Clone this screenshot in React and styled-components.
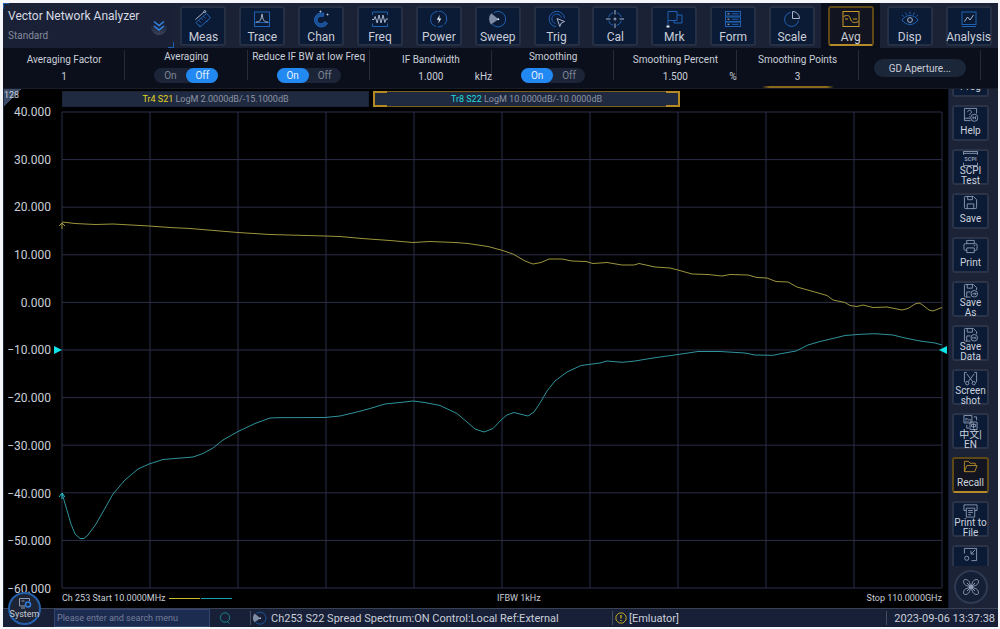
import { useLayoutEffect, useRef, useState } from "react";
import styled, { createGlobalStyle } from "styled-components";

const BLUE = "#1f62b4";
const PALE = "#aab6cc";
const GOLD = "#c9982c";

const topIcons = {
  Meas: (
    <>
      <path d="M2 12.5 12.5 3.5 16.5 8 6 17z" stroke={BLUE} />
      <path d="M5 10.5l2 2.2M7.5 8.4l1.6 1.7M9.8 6.4l2 2.2M12 10.5l1.5 1.5M5 14.5l1 1" stroke={BLUE} />
      <path d="M1.5 9.5 10 2" stroke={PALE} />
      <circle cx="10.8" cy="1.6" r="1" stroke={PALE} />
    </>
  ),
  Trace: (
    <>
      <rect x="1.5" y="2" width="15" height="14.5" stroke={BLUE} />
      <path d="M1.5 12.5h15" stroke={BLUE} />
      <path d="M3 12c4.5 0 5-2 6-8 1 6 1.5 8 6 8" stroke={PALE} />
    </>
  ),
  Chan: (
    <>
      <path d="M12 3.4A7 7 0 1 0 15.5 13.5L12.5 11.5A3.8 3.8 0 1 1 11 6.8z" fill="#1a4f94" stroke={BLUE} />
      <path d="M8.5 .5v2M7.5 1.5h2M15.5 3.5v2M14.500 4.5h2" stroke={PALE} />
    </>
  ),
  Freq: (
    <>
      <path d="M1.5 5V2h15v3M1.5 13.5v3h15v-3" stroke={BLUE} />
      <path d="M1 9.5h2l1.2-3 2 6.5L8 5l2 8 2-8 1.8 7.5L15.2 9H17" stroke={PALE} />
    </>
  ),
  Power: (
    <>
      <path d="M7.5 1.5A7.7 7.7 0 0 0 6 16.5M9 1.3A7.7 7.7 0 0 1 14.5 14.5M8 16.8a7.7 7.7 0 0 0 5-1.2" stroke={BLUE} />
      <path d="M9.8 4.8 6.8 9.8H9l-.7 3.7 3-5H9.2z" fill="#e4ebf8" />
    </>
  ),
  Sweep: (
    <>
      <path d="M4.5 2.9A7.7 7.7 0 1 1 3 14" stroke={BLUE} />
      <path d="M9.5 9.3 2.2 3.2A9 9 0 0 0 2 14.5z" fill="#7e8ba4" />
      <circle cx="9.3" cy="9.3" r="1" fill="#dce4f2" />
    </>
  ),
  Trig: (
    <>
      <path d="M16.5 8A7.7 7.7 0 1 0 8 16.7" stroke={BLUE} />
      <path d="M13.3 7.5A4.8 4.8 0 1 0 7.5 13.5" stroke={BLUE} />
      <path d="M9 8.5l7.5 3-3.2 1.5-1.5 3.5z" stroke={PALE} />
    </>
  ),
  Cal: (
    <>
      <path d="M7.2 2.6a6.8 6.8 0 0 0-4.6 4.6M10.8 2.6a6.8 6.8 0 0 1 4.6 4.6M15.4 10.8a6.8 6.8 0 0 1-4.6 4.6M7.2 15.4a6.8 6.8 0 0 1-4.6-4.6" stroke={BLUE} />
      <path d="M9 0v4.5M9 13.5V18M0 9h4.5M13.5 9H18" stroke={PALE} />
      <path d="M9 7.5v3M7.5 9h3" stroke={PALE} />
    </>
  ),
  Mrk: (
    <>
      <path d="M3 15V1.5h9v9H3M12 5h5v8H9v-2.5" stroke={BLUE} />
      <path d="M1.5 16.5h3" stroke="#e4ebf8" strokeWidth="2" />
    </>
  ),
  Form: (
    <>
      <rect x="1.5" y="1.5" width="15" height="4.5" stroke={BLUE} />
      <rect x="1.5" y="7" width="15" height="4.5" stroke={BLUE} />
      <rect x="1.5" y="12" width="15" height="4.5" stroke={BLUE} />
      <path d="M3.5 3.8h2M3.5 9.2h2M3.5 14.3h2" stroke={PALE} />
      <path d="M8 3.8h6.5M8 9.2h6.5M8 14.3h6.5" stroke={BLUE} />
    </>
  ),
  Scale: (
    <>
      <path d="M7.5 2.5A7 7 0 1 0 15.5 10.5" stroke={BLUE} />
      <path d="M9.5 1.5A7 7 0 0 1 16.5 8.5h-7z" stroke={PALE} />
    </>
  ),
  Avg: (
    <>
      <rect x="1" y="1.5" width="16" height="15" stroke={GOLD} />
      <path d="M1.5 6.500c4.500-2 6-1 7 2.500s3.500 4.500 8 2.500M3 9h3M11 9h4" stroke={GOLD} />
    </>
  ),
  Disp: (
    <>
      <path d="M1 10c4-6 12-6 16 0-4 6-12 6-16 0z" stroke={BLUE} />
      <path d="M9 1.500v2.500M4.500 2.500l1.200 2.300M13.500 2.500l-1.200 2.300M1 5l1.800 1.500M17 5l-1.800 1.500" stroke={BLUE} />
      <circle cx="9" cy="10" r="2.4" stroke={PALE} />
    </>
  ),
  Analysis: (
    <>
      <rect x="2" y="2" width="14" height="12.5" stroke={BLUE} />
      <path d="M2 16.5h14" stroke={BLUE} />
      <path d="M4.5 11.5l3-4.5 2.5 3L13.5 5" stroke={PALE} />
    </>
  ),
};

const disk =
  "M8 15H2.500A1 1 0 0 1 1.500 14V2.500A1 1 0 0 1 2.500 1.500H11L14.500 5V7.500M4.500 1.500V5.500H10V1.500M4 15V9.500h4";

const sideItems = [
  { lines: ["Prog"], icon: <path d="M2 2h12v12H2z" /> },
  {
    lines: ["Help"],
    icon: (
      <>
        <path d="M8 14.5H1.5v-13h13V7M1.5 12h6M5 5.5c0-3 4-2.5 4 0 0 1.5-2 1.5-2 3M7 10v1" />
        <circle cx="12" cy="11.5" r="3.8" />
        <path d="M10.7 10v3M13.3 10v3M10.7 11.5h2.6" />
      </>
    ),
  },
  {
    lines: ["SCPI", "Test"],
    icon: (
      <>
        <path d="M.5 4V.5h15V4M.5 2.500h15M.5 12.500v3h15v-3" />
        <text x="8" y="10.500" fontSize="6" fontWeight="700" textAnchor="middle" fill="currentColor" stroke="none">
          SCPI
        </text>
      </>
    ),
  },
  {
    lines: ["Save"],
    icon: (
      <path d="M2.5 14.5a1 1 0 0 1-1-1v-11a1 1 0 0 1 1-1H11l3.5 3.5v8.5a1 1 0 0 1-1 1zM5 1.5v3.5h5V1.5M4.5 14.5v-5h7v5" />
    ),
  },
  {
    lines: ["Print"],
    icon: (
      <path d="M4 5V1.5h8V5M4 12H2.5A1.500 1.500 0 0 1 1 10.5v-4A1.500 1.500 0 0 1 2.5 5h11A1.500 1.500 0 0 1 15 6.5v4a1.500 1.500 0 0 1-1.5 1.5H12M4 9.5h8v5H4zM11.5 7h1.5" />
    ),
  },
  {
    lines: ["Save", "As"],
    icon: (
      <>
        <path d={disk} />
        <circle cx="12" cy="11.5" r="3.5" />
        <path d="M10 11.5h4M12.500 10 14 11.500l-1.500 1.500" />
      </>
    ),
  },
  {
    lines: ["Save", "Data"],
    icon: (
      <>
        <path d={disk} />
        <circle cx="12" cy="11.5" r="3.5" />
        <path d="M10.500 10.500v2M12 10.500v2M13.500 10.500v2" />
      </>
    ),
  },
  {
    lines: ["Screen", "shot"],
    icon: (
      <>
        <path d="M4 1.5H1.5V12M12 1.5h2.500V12M4 3l6.500 8.500M12 3l-6.500 8.500" />
        <circle cx="4.500" cy="13" r="1.800" />
        <circle cx="11.500" cy="13" r="1.800" />
      </>
    ),
  },
  {
    lines: ["中文|", "EN"],
    icon: (
      <>
        <path d="M1 .5h8.500v8H1zM11.500 2h3v3.500M4 10.500V14h2.500" />
        <text x="2" y="7" fontSize="6" fill="currentColor" stroke="none">
          En
        </text>
        <path d="M7.500 7.500H15v8H7.500zM9 10h4.500v2.500H9zM11.200 8.500v6" />
      </>
    ),
  },
  {
    lines: ["Recall"],
    active: true,
    icon: <path d="M1.5 13.5v-11H6L7.5 4.5H13V7M1.5 13.5 4 7h11l-2.5 6.5z" />,
  },
  {
    lines: ["Print to", "File"],
    icon: <path d="M3.5 8H1V2h14v6h-2.5M3.5 5.5h9V15h-9zM5.5 8h5M5.5 10h5M5.5 12.5h3" />,
  },
  {
    lines: [""],
    icon: (
      <>
        <path d="M1.5 7V1.5h13v13H9M13 3 8.5 7.5M8.5 4v3.5H12" />
        <circle cx="4" cy="12" r="2.2" />
      </>
    ),
  },
];

const params = [
  { id: "factor", label: "Averaging Factor", value: "1" },
  { id: "averaging", label: "Averaging", toggle: "Off" },
  { id: "reduce", label: "Reduce IF BW at low Freq", toggle: "On" },
  { id: "ifbw", label: "IF Bandwidth", value: "1.000", unit: "kHz" },
  { id: "smoothing", label: "Smoothing", toggle: "On" },
  { id: "percent", label: "Smoothing Percent", value: "1.500", unit: "%" },
  { id: "points", label: "Smoothing Points", value: "3", active: true },
];

const scale = [40, 30, 20, 10, 0, -10, -20, -30, -40, -50, -60];

// trace points, 880 x 476 graph units
const s21 =
  "0,110 13,111.5 33,112.5 51,112 87,114 108,115.5 128,116.5 176,120.5 208,122.5 263,124 278,124.5 300,126.5 328,128.5 351,130.5 368,129.5 393,130.5 406,131.5 426,134.5 439,138 451,142 463,149 471,152 479,150.5 487,147 500,147 510,149 524,149.5 531,151.5 545,150.5 560,153 572,153 577,151.5 593,155 608,156 616,158 630,162 646,162.5 660,164 668,162.5 686,163 695,165.5 705,166 714,169.5 726,170 735,175 751,179.5 765,183.5 771,188 783,190.5 788,193.5 795,194.5 801,193 811,195.5 825,195 840,198 846,196.5 853,192 857,191 860,192.5 867,198 871,199 880,195.5";
const s22 =
  "0,381 4,395 9,412 13,422 18,426.5 22,426.5 26,423 34,412 42,398 51,382 63,368 76,357 87,352 101,347.5 113,346.5 131,345 141,341.5 151,336 161,328 176,319.5 193,311.5 208,306 216,305.7 263,305.5 278,304 293,300.5 308,296.5 323,292 338,290.5 351,289 363,290.5 378,293.5 395,301.5 405,310 413,317 422,320 431,316.5 439,308 445,303 452,300.5 460,302.5 466,304 472,300 478,291 485,279 493,269 505,260 519,253.5 538,251 545,249 560,250.3 573,249 588,246.5 598,245 616,242.5 636,239.5 658,239.5 683,241 693,243 711,243.3 720,241.5 734,239 746,233 758,229.5 773,226 783,223.5 798,222.3 813,221.7 831,223 843,226 858,229 873,231 880,233";

const Toggle = ({ label, initial }) => {
  const [value, setValue] = useState(initial);

  return (
    <ToggleBox role="group" aria-label={label}>
      {["On", "Off"].map((option) => (
        <ToggleButton
          key={option}
          type="button"
          $on={value === option}
          aria-pressed={value === option}
          onClick={() => setValue(option)}
        >
          {option}
        </ToggleButton>
      ))}
    </ToggleBox>
  );
};

const TopBar = () => (
  <TopBox>
    <TitleBox>
      <TitleText>
        <h1>Vector Network Analyzer</h1>
        <p>Standard</p>
      </TitleText>
      <ExpandButton type="button" aria-label="Expand">
        <svg width="16" height="18" viewBox="0 0 16 18" fill="none" stroke="#2f86e8" strokeWidth="1.5">
          <path d="M3 4.5l5 4 5-4M3 9l5 4 5-4" />
        </svg>
      </ExpandButton>
    </TitleBox>
    <Menu>
      {Object.keys(topIcons).map((name) => (
        <MenuCell key={name} $active={name === "Avg"}>
          <MenuButton type="button" $active={name === "Avg"}>
            <svg width="18" height="18" viewBox="0 0 18 18" fill="none">
              {topIcons[name]}
            </svg>
            <span>{name}</span>
          </MenuButton>
        </MenuCell>
      ))}
    </Menu>
  </TopBox>
);

const ParamBar = () => (
  <ParamBox>
    {params.map((param) => (
      <ParamCell key={param.id} $active={param.active}>
        {param.toggle ? (
          <>
            <ToggleLabel>{param.label}</ToggleLabel>
            <Toggle label={param.label} initial={param.toggle} />
          </>
        ) : (
          <>
            <ParamLabel htmlFor={param.id}>{param.label}</ParamLabel>
            <ValueRow>
              <ValueInput id={param.id} defaultValue={param.value} />
              <Unit>{param.unit}</Unit>
            </ValueRow>
          </>
        )}
      </ParamCell>
    ))}
    <ParamCell>
      <ApertureButton type="button">GD Aperture...</ApertureButton>
    </ParamCell>
  </ParamBox>
);

const Graph = () => (
  <GraphSvg viewBox="0 0 880 476" preserveAspectRatio="none">
    <g stroke="#2b2e48" fill="none">
      {scale.map((value, i) => (
        <path key={value} d={`M0 ${i * 47.6}H880M${i * 88} 0V476`} vectorEffect="non-scaling-stroke" />
      ))}
    </g>
    <g fill="none" strokeLinejoin="round">
      <polyline points={s21} stroke="#9c953c" vectorEffect="non-scaling-stroke" />
      <polyline points={s22} stroke="#2f939c" vectorEffect="non-scaling-stroke" />
      <path d="M-3 114l3-3 3 3M0 111v6" stroke="#a89c30" />
      <path d="M-3 385l3-4 3 4M0 381v6" stroke="#22c5cc" />
    </g>
    <path d="M-8 234v8l8-4zM885 234v8l-8-4z" fill="#10e4e8" />
  </GraphSvg>
);

const Plot = () => (
  <PlotBox>
    <Corner>128</Corner>
    <Axis>
      {scale.map((value) => (
        <span key={value}>{value.toFixed(3).replace("-", "−")}</span>
      ))}
    </Axis>
    <PlotBody>
      <TraceTabs>
        <TraceTab type="button" $color="#e2d622">
          <b>Tr4 S21</b> LogM 2.0000dB/-15.1000dB
        </TraceTab>
        <TraceTab type="button" $color="#1fdadd" $active>
          <b>Tr8 S22</b> LogM 10.0000dB/-10.0000dB
        </TraceTab>
      </TraceTabs>
      <Graph />
      <Footer>
        <FooterPart>
          <span>Ch 253 Start 10.0000MHz</span>
          <Legend>
            <LegendLine $color="#c9bd20" />
            <LegendLine $color="#16a3ae" />
          </Legend>
        </FooterPart>
        <FooterPart $spread>
          <span>IFBW 1kHz</span>
          <span>Stop 110.0000GHz</span>
        </FooterPart>
      </Footer>
    </PlotBody>
  </PlotBox>
);

const Sidebar = () => {
  const listRef = useRef(null);

  useLayoutEffect(() => {
    listRef.current.scrollTop = 28;
  }, []);

  return (
    <SideBox>
      <SideList ref={listRef}>
        {sideItems.map((item, i) => (
          <SideButton
            key={i}
            type="button"
            $active={item.active}
            $tall={item.lines.length > 1}
            aria-label={item.lines[0] ? undefined : "Minimize"}
          >
            <svg width="15" height="15" viewBox="0 0 16 16" fill="none" stroke="currentColor">
              {item.icon}
            </svg>
            {item.lines.map((line) => (
              <span key={line}>{line}</span>
            ))}
          </SideButton>
        ))}
      </SideList>
      <RoundButton type="button" aria-label="Tools">
        <svg width="18" height="18" viewBox="0 0 18 18" fill="none" stroke="#8d9ab2">
          {[0, 90, 180, 270].map((angle) => (
            <path
              key={angle}
              d="M9 9 7.500 4.500C6.500 1.500 3 1 2 2s-.5 4.500 2.500 5.500zM9 9 5 5"
              transform={`rotate(${angle} 9 9)`}
            />
          ))}
        </svg>
      </RoundButton>
    </SideBox>
  );
};

const StatusBar = () => (
  <StatusBox>
    <SystemButton type="button">
      <svg width="14" height="12" viewBox="0 0 14 12" fill="none">
        <path d="M7 9H1.5V1.5h10V4M3.5 4h3M3 11h4" stroke="#8d9ab2" />
        <circle cx="10" cy="7.5" r="2.5" stroke="#2f7fe0" strokeWidth="1.5" />
      </svg>
      <span>System</span>
    </SystemButton>
    <SearchBox>
      <SearchInput aria-label="Search menu" placeholder="Please enter and search menu" />
      <SearchButton type="button" aria-label="Search">
        <svg width="14" height="14" viewBox="0 0 14 14" fill="none" stroke="#1c8088">
          <circle cx="7" cy="6.5" r="4.7" />
          <path d="M9.5 10.5l2 2" />
        </svg>
      </SearchButton>
    </SearchBox>
    <StatusPart $grow={361}>
      <svg width="14" height="14" viewBox="0 0 18 18" fill="none">
        {topIcons.Sweep}
      </svg>
      <span>Ch253 S22 Spread Spectrum:ON Control:Local Ref:External</span>
    </StatusPart>
    <StatusPart $grow={272} $tight>
      <svg width="12" height="12" viewBox="0 0 12 12" fill="none" stroke="#b8a020">
        <path d="M4 1h4l3 3v4l-3 3H4L1 8V4z" />
        <path d="M6 3v3.5M6 8v1" strokeWidth="1.5" />
      </svg>
      <span>[Emluator]</span>
    </StatusPart>
    <StatusPart as="time" $time>
      2023-09-06 13:37:38
    </StatusPart>
  </StatusBox>
);

const App = () => (
  <>
    <GlobalStyle />
    <Page>
      <TopBar />
      <ParamBar />
      <Main>
        <Plot />
        <Sidebar />
      </Main>
      <StatusBar />
    </Page>
  </>
);

const GlobalStyle = createGlobalStyle`
  * {
    box-sizing: border-box;
  }
  body {
    margin: 0;
    background: #ffffff;
  }
  body, button, input {
    font-family: Roboto, "Noto Sans CJK SC", sans-serif;
  }
  button, input {
    margin: 0;
    padding: 0;
    border: none;
    color: inherit;
    background: none;
  }
  h1, p {
    margin: 0;
  }
`;

const Page = styled.div`
  display: flex;
  flex-direction: column;
  height: 100vh;
  border: solid #f4f6f9;
  border-width: 3px 2px 2px 3px;
  background: #000000;
  color: #c9ced8;
`;

const TopBox = styled.header`
  display: flex;
  flex: none;
  height: 45px;
  background: #1c2235;
`;

const TitleBox = styled.div`
  position: relative;
  display: flex;
  flex: none;
  align-items: center;
  justify-content: space-between;
  width: 171px;
  padding: 0 7px 0 5px;
  background: #1a2136;

  &::before,
  &::after {
    content: "";
    position: absolute;
    width: 5px;
    height: 5px;
    border: 0 solid #1d5fae;
  }
  &::before {
    top: 0;
    left: 0;
    border-width: 1px 0 0 1px;
  }
  &::after {
    right: 0;
    bottom: 0;
    border-width: 0 1px 1px 0;
  }
`;

const TitleText = styled.div`
  h1 {
    font-size: 12px;
    line-height: 20px;
    font-weight: 400;
    color: #d5d9e2;
    white-space: nowrap;
  }
  p {
    font-size: 10px;
    line-height: 20px;
    color: #838a9b;
  }
`;

const ExpandButton = styled.button`
  display: flex;
  border-radius: 8px;
  background: linear-gradient(transparent 40%, #39435a);
`;

const Menu = styled.nav`
  display: grid;
  flex: 1;
  grid-template-columns: repeat(14, 1fr);
`;

const MenuCell = styled.div`
  display: flex;
  align-items: center;
  justify-content: center;
  background: ${(props) => (props.$active ? "#0a0e1a" : "none")};
`;

const MenuButton = styled.button`
  display: flex;
  flex-direction: column;
  align-items: center;
  width: 46px;
  height: 40px;
  padding-top: 2px;
  border: 2px solid ${(props) => (props.$active ? "#5e4816" : "#263044")};
  border-bottom-color: ${(props) => (props.$active ? "#b58a28" : "#263044")};
  border-radius: 3px;
  background: ${(props) => (props.$active ? "#12151f" : "#0b1a35")};
  cursor: pointer;

  svg {
    flex: none;
  }
  span {
    font-size: 12px;
    line-height: 18px;
  }
`;

const ParamBox = styled.section`
  display: grid;
  flex: none;
  grid-template-columns: repeat(8, 1fr);
  height: 41px;
  padding-right: 17px;
  border-bottom: 1px solid #181c28;
  background: #0b0f1c;
`;

const ParamCell = styled.div`
  position: relative;
  display: flex;
  flex-direction: column;
  align-items: center;
  justify-content: center;
  background: linear-gradient(#252b3b, #252b3b) right 2px / 1px 30px no-repeat;

  &::after {
    content: "";
    position: absolute;
    bottom: 0;
    width: 72px;
    height: 2px;
    background: ${(props) =>
      props.$active ? "linear-gradient(90deg, transparent, #8a691c 10% 90%, transparent)" : "none"};
  }
`;

const ParamLabel = styled.label`
  font-size: 10px;
  line-height: 16px;
  white-space: nowrap;
`;

const ToggleLabel = styled.span`
  margin: -5px 0 3px;
  font-size: 10px;
  line-height: 16px;
  white-space: nowrap;
`;

const ValueRow = styled.div`
  display: grid;
  grid-template-columns: 1fr 50px 1fr;
  align-items: center;
  width: 100%;
  font-size: 10px;
`;

const ValueInput = styled.input`
  grid-column: 2;
  width: 50px;
  height: 16px;
  font-size: 10px;
  text-align: center;
  outline: none;
`;

const Unit = styled.span`
  justify-self: end;
`;

const ToggleBox = styled.div`
  display: flex;
  border-radius: 8px;
  background: #1c2437;
`;

const ToggleButton = styled.button`
  width: 32px;
  height: 15px;
  border-radius: 8px;
  font-size: 10px;
  line-height: 15px;
  color: ${(props) => (props.$on ? "#e6f0fc" : "#7f8695")};
  background: ${(props) => (props.$on ? "#2389f2" : "none")};
  cursor: pointer;
`;

const ApertureButton = styled.button`
  width: 92px;
  height: 18px;
  border-radius: 9px;
  font-size: 10px;
  background: #1c2639;
  cursor: pointer;
`;

const Main = styled.main`
  display: flex;
  flex: 1;
  min-height: 0;
`;

const PlotBox = styled.section`
  position: relative;
  display: flex;
  flex: 1;
  min-width: 0;
  padding-right: 6px;
  border-left: 1px solid #1c2638;
`;

const Corner = styled.div`
  position: absolute;
  top: 0;
  left: 0;
  width: 18px;
  height: 17px;
  font-size: 9px;
  line-height: 12px;
  background: linear-gradient(135deg, #3b4a66 50%, transparent 50%);
`;

const Axis = styled.div`
  display: flex;
  flex: none;
  flex-direction: column;
  justify-content: space-between;
  width: 47px;
  padding: 15px 0 11px;
  font-size: 12px;
  line-height: 16px;
  text-align: right;
`;

const PlotBody = styled.div`
  display: flex;
  flex: 1;
  flex-direction: column;
  min-width: 0;
  margin-left: 11px;
`;

const TraceTabs = styled.div`
  display: grid;
  grid-template-columns: 307fr 307fr 258fr;
  gap: 4px;
  height: 16px;
  margin: 2px 0 5px;
`;

const TraceTab = styled.button`
  position: relative;
  border: 1px solid ${(props) => (props.$active ? "#7a5f1c" : "#1b2336")};
  font-size: 9px;
  line-height: 14px;
  color: #8d94a3;
  background: #1f2940;
  cursor: pointer;

  b {
    font-weight: 400;
    color: ${(props) => props.$color};
  }
  &::before,
  &::after {
    content: "";
    position: absolute;
    top: -1px;
    bottom: -1px;
    width: 12px;
    border: ${(props) => (props.$active ? "solid #b58a24" : "none")};
  }
  &::before {
    left: -1px;
    border-width: 2px 0 2px 2px;
  }
  &::after {
    right: -1px;
    border-width: 2px 2px 2px 0;
  }
`;

const GraphSvg = styled.svg`
  display: block;
  flex: 1;
  width: 100%;
  min-height: 0;
  overflow: visible;
`;

const Footer = styled.div`
  display: grid;
  flex: none;
  grid-template-columns: 435fr 445fr;
  height: 20px;
  font-size: 9px;
`;

const FooterPart = styled.div`
  display: flex;
  align-items: center;
  justify-content: ${(props) => (props.$spread ? "space-between" : "flex-start")};
`;

const Legend = styled.div`
  display: flex;
  gap: 1px;
  margin-left: 3px;
`;

const LegendLine = styled.div`
  width: 31px;
  height: 1px;
  background: ${(props) => props.$color};
`;

const SideBox = styled.aside`
  display: flex;
  flex: none;
  flex-direction: column;
  align-items: center;
  width: 50px;
  padding: 0 6px 4px 0;
  border-left: 1px solid #10182c;
  background: #1d2337;
`;

const SideList = styled.div`
  display: flex;
  flex: 1;
  flex-direction: column;
  gap: 8px;
  min-height: 0;
  overflow: auto;
  scrollbar-width: none;
`;

const SideButton = styled.button`
  display: flex;
  flex: none;
  flex-direction: column;
  align-items: center;
  width: 37px;
  height: 36px;
  border: 2px solid ${(props) => (props.$active ? "#5e4816" : "#2a3347")};
  border-bottom-color: ${(props) => (props.$active ? "#b58a28" : "#2a3347")};
  border-radius: 3px;
  color: ${(props) => (props.$active ? "#b58a28" : "#8b98b0")};
  background: ${(props) => (props.$active ? "#12151f" : "#0b1a35")};
  cursor: pointer;

  svg {
    flex: none;
  }
  span {
    font-size: 10px;
    line-height: ${(props) => (props.$tall ? "10px" : "18px")};
    color: #ccd2dd;
    white-space: nowrap;
  }
`;

const RoundButton = styled.button`
  display: flex;
  flex: none;
  align-items: center;
  justify-content: center;
  width: 34px;
  height: 34px;
  margin-top: 4px;
  border: 2px solid #2d3a52;
  border-radius: 50%;
  background: #141e35;
  cursor: pointer;
`;

const StatusBox = styled.footer`
  position: relative;
  display: flex;
  flex: none;
  align-items: stretch;
  height: 19px;
  border-top: 1px solid #3b4254;
  background: #182038;
  font-size: 11px;
`;

const SystemButton = styled.button`
  position: absolute;
  bottom: 2px;
  left: 5px;
  display: flex;
  flex-direction: column;
  align-items: center;
  justify-content: center;
  width: 33px;
  height: 33px;
  border: 2px solid #2460ac;
  border-radius: 50%;
  background: #1c2436;
  cursor: pointer;

  svg {
    flex: none;
  }
  span {
    font-size: 9px;
    line-height: 11px;
  }
`;

const SearchBox = styled.div`
  display: flex;
  flex: none;
  width: 247px;
  padding-left: 51px;
`;

const SearchInput = styled.input`
  width: 156px;
  padding-left: 2px;
  border: 1px solid #33456e;
  font-size: 9px;
  background: #1c2b50;
  outline: none;

  &::placeholder {
    color: #747f98;
  }
`;

const SearchButton = styled.button`
  display: flex;
  align-items: center;
  padding-left: 8px;
`;

const StatusPart = styled.div`
  display: flex;
  flex: ${(props) => (props.$time ? "none" : `${props.$grow} 1 0`)};
  align-items: center;
  gap: ${(props) => (props.$tight ? "2px" : "4px")};
  min-width: 0;
  padding: 0 3px;
  padding-left: ${(props) => (props.$time ? "8px" : "3px")};
  background: linear-gradient(#454c5e, #454c5e) left center / 1px 14px no-repeat;
  white-space: nowrap;

  svg {
    flex: none;
  }
`;

export default App;
